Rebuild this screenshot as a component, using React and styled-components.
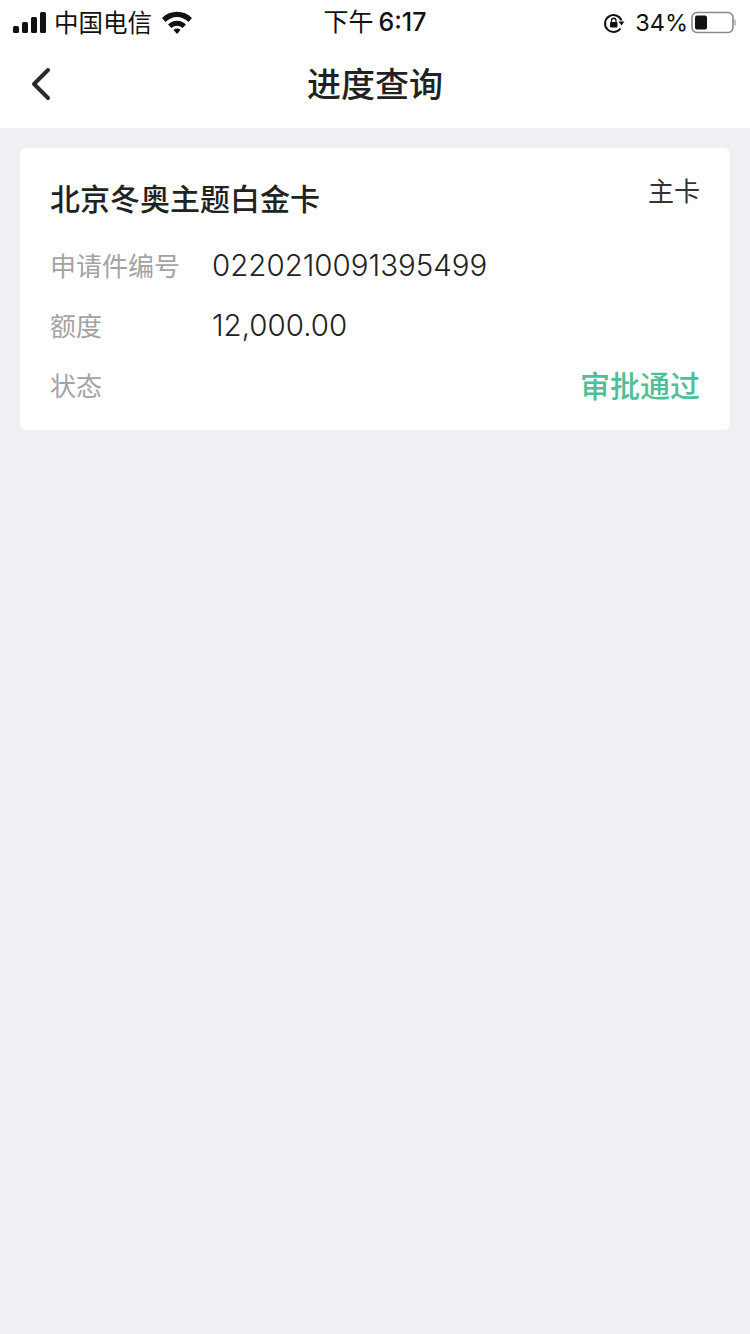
import React from 'react';
import styled, { createGlobalStyle } from 'styled-components';

const GlobalStyle = createGlobalStyle`
  html, body {
    margin: 0;
    padding: 0;
    background: #efeff4;
  }
  * {
    box-sizing: border-box;
  }
`;

const FONT = `"Inter", "Liberation Sans", "Noto Sans CJK SC", sans-serif`;
const CJK = `"Noto Sans CJK SC", sans-serif`;

const Page = styled.div`
  width: 750px;
  height: 1334px;
  background: #efeff4;
  font-family: ${FONT};
  overflow: hidden;
`;

const StatusBar = styled.div`
  height: 40px;
  background: #fff;
  display: grid;
  grid-template-columns: 1fr auto 1fr;
  align-items: center;
  padding: 0 13px;
  color: #111;
`;

const StatusLeft = styled.div`
  display: flex;
  align-items: center;
`;

const StatusRight = styled.div`
  display: flex;
  align-items: center;
  justify-content: flex-end;
`;

const Carrier = styled.span`
  font-family: ${CJK};
  font-size: 24.5px;
  line-height: 40px;
  margin-left: 7px;
  margin-right: 10px;
  padding-bottom: 3px;
`;

const Clock = styled.span`
  font-family: ${FONT};
  font-size: 25px;
  font-weight: 500;
  line-height: 40px;
  padding-bottom: 4px;
`;

const ClockCjk = styled.span`
  font-family: ${CJK};
  font-weight: 400;
  margin-right: 5px;
`;

const Percent = styled.span`
  font-size: 23.5px;
  line-height: 40px;
  margin: 0 3px 0 10px;
`;

const NavBar = styled.div`
  height: 88px;
  background: #fff;
  display: flex;
  align-items: center;
  justify-content: center;
  position: relative;
  padding-bottom: 4px;
`;

const BackIcon = styled.svg`
  position: absolute;
  left: 30px;
  top: 27px;
`;

const NavTitle = styled.h1`
  margin: 0;
  font-family: ${CJK};
  font-size: 34px;
  font-weight: 500;
  color: #222;
`;

const Content = styled.div`
  padding: 20px;
`;

const Card = styled.div`
  height: 282px;
  background: #fff;
  border-radius: 6px;
  padding: 0 31px;
  display: flex;
  flex-direction: column;
`;

const CardHead = styled.div`
  display: flex;
  justify-content: space-between;
  align-items: flex-start;
  height: 88px;
`;

const CardName = styled.div`
  font-family: ${CJK};
  font-size: 30px;
  font-weight: 500;
  color: #222;
  line-height: 44px;
  margin-top: 27px;
  margin-left: -1px;
`;

const CardKind = styled.div`
  font-family: ${CJK};
  font-size: 26px;
  color: #333;
  line-height: 36px;
  margin-top: 24px;
  margin-right: -1px;
`;

const Row = styled.div`
  height: 60px;
  display: flex;
  align-items: center;
  padding-bottom: 2px;
`;

const Label = styled.span`
  width: 161px;
  margin-left: -1px;
  margin-right: 1px;
  padding-bottom: 2px;
  font-family: ${CJK};
  font-size: 26px;
  color: #a3a3a3;
`;

const Value = styled.span`
  font-size: 29.5px;
  font-weight: 300;
  color: #222;
`;

const Status = styled.span`
  margin-left: auto;
  margin-right: -1px;
  padding-bottom: 2px;
  font-family: ${CJK};
  font-size: 30px;
  font-weight: 500;
  color: #4fbf98;
`;

const SignalIcon = () => (
  <svg width="34" height="22" viewBox="0 0 34 22">
    <rect x="0" y="14" width="6" height="7" rx="1.5" fill="#111" />
    <rect x="9" y="10" width="6" height="11" rx="1.5" fill="#111" />
    <rect x="18" y="5" width="6" height="16" rx="1.5" fill="#111" />
    <rect x="27" y="0" width="6" height="21" rx="1.5" fill="#111" />
  </svg>
);

const WifiIcon = () => (
  <svg width="30" height="24" viewBox="0 0 30 24">
    <path d="M0 7 A21 21 0 0 1 30 7 L26.5 11 A16 16 0 0 0 3.5 11 Z" fill="#111" />
    <path d="M6 13.5 A12.5 12.5 0 0 1 24 13.5 L20.5 17 A8 8 0 0 0 9.5 17 Z" fill="#111" />
    <path d="M11.5 19 A5 5 0 0 1 18.5 19 L15 23 Z" fill="#111" />
  </svg>
);

const LockIcon = () => (
  <svg width="22" height="22" viewBox="0 0 22 22">
    <path d="M17.5 16.5 A8.5 8.5 0 1 1 18.5 8.5" fill="none" stroke="#111" strokeWidth="2" />
    <path d="M15.5 9.5 L21.5 9.5 L18.5 13.5 Z" fill="#111" />
    <rect x="7" y="10" width="7.5" height="5.5" rx="1" fill="#111" />
    <path d="M8.5 10 V8.5 A2.2 2.2 0 0 1 13 8.5 V10" fill="none" stroke="#111" strokeWidth="1.3" />
  </svg>
);

const BatteryIcon = () => (
  <svg width="46" height="24" viewBox="0 0 46 24">
    <rect x="1" y="1.5" width="41" height="20" rx="5" fill="none" stroke="#8a8a8a" strokeWidth="1.6" />
    <rect x="4" y="4.5" width="12" height="14" rx="2" fill="#111" />
    <path d="M44 8.5 V14.5" stroke="#b5b5b5" strokeWidth="1.6" />
  </svg>
);

const App = () => (
  <Page>
    <GlobalStyle />
    <StatusBar>
      <StatusLeft>
        <SignalIcon />
        <Carrier>中国电信</Carrier>
        <WifiIcon />
      </StatusLeft>
      <Clock>
        <ClockCjk>下午</ClockCjk>6:17
      </Clock>
      <StatusRight>
        <LockIcon />
        <Percent>34%</Percent>
        <BatteryIcon />
      </StatusRight>
    </StatusBar>
    <NavBar>
      <BackIcon width="22" height="34" viewBox="0 0 22 34">
        <path d="M18 3 L4 17 L18 31" fill="none" stroke="#2a2a2a" strokeWidth="4" strokeLinecap="round" strokeLinejoin="round" />
      </BackIcon>
      <NavTitle>进度查询</NavTitle>
    </NavBar>
    <Content>
      <Card>
        <CardHead>
          <CardName>北京冬奥主题白金卡</CardName>
          <CardKind>主卡</CardKind>
        </CardHead>
        <Row>
          <Label>申请件编号</Label>
          <Value>0220210091395499</Value>
        </Row>
        <Row>
          <Label>额度</Label>
          <Value>12,000.00</Value>
        </Row>
        <Row>
          <Label>状态</Label>
          <Status>审批通过</Status>
        </Row>
      </Card>
    </Content>
  </Page>
);

export default App;
